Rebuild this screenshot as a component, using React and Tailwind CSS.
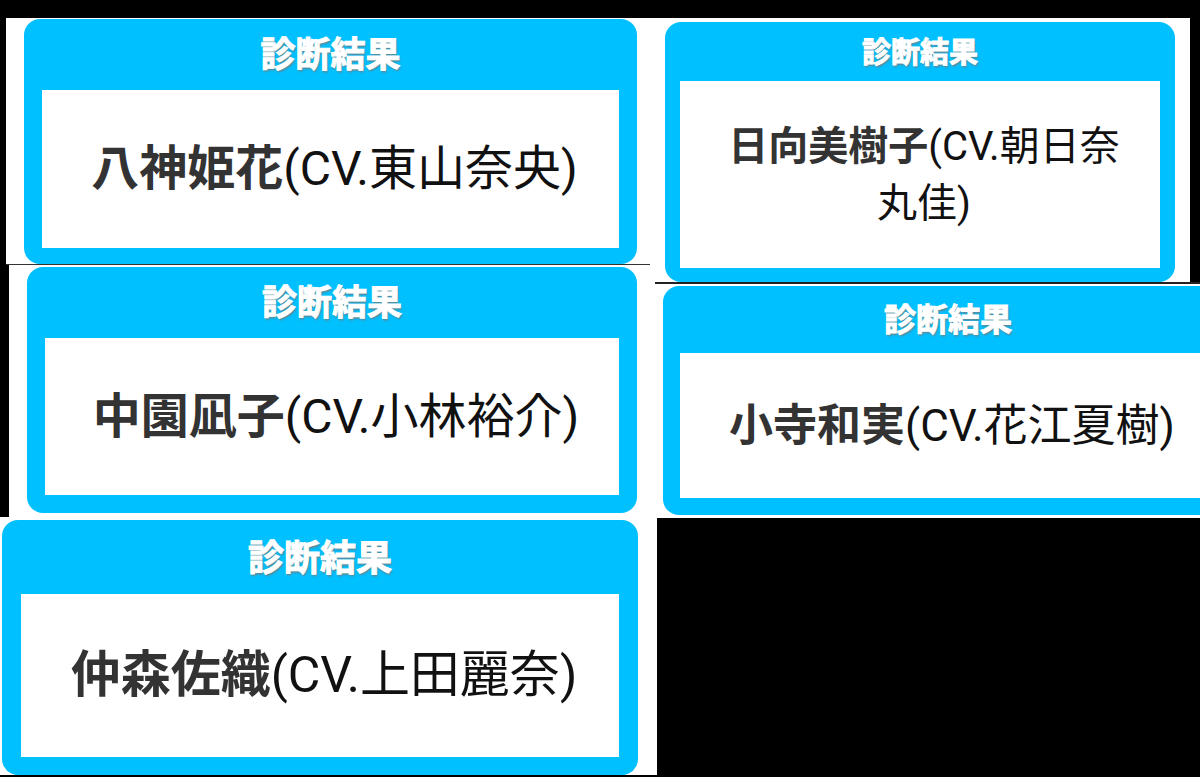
const TITLE = '診断結果'

function ResultCard({ name, cast, className, titleClass, bodyClass }) {
  return (
    <section className={`rounded-2xl bg-[#00c0ff] ${className}`}>
      <h2
        className={`flex items-center justify-center font-bold text-white [-webkit-text-stroke:1px_white] [text-shadow:1px_2px_2px_rgba(120,120,120,0.8)] ${titleClass}`}
      >
        {TITLE}
      </h2>
      <div className={`flex items-center justify-center bg-white text-center text-[#111] ${bodyClass}`}>
        <p>
          <strong className="font-bold text-[#333]">{name}</strong>
          (CV.{cast})
        </p>
      </div>
    </section>
  )
}

export default function App() {
  return (
    <main
      lang="ja"
      className="grid min-h-screen grid-cols-[655fr_545fr] bg-black pt-[18px] pb-[2px] font-[Roboto,'Noto_Sans_CJK_JP',sans-serif]"
    >
      {/* Left column */}
      <div className="bg-white">
        <div className="border-l-6 border-black">
          <div className="px-[18px] pt-px">
            <ResultCard
              name="八神姫花"
              cast="東山奈央"
              className="px-[18px] pb-4"
              titleClass="h-[71px] pt-1 text-[35px]"
              bodyClass="h-[158px] pl-2 text-[48px]"
            />
          </div>
          <hr className="mr-[5px] border-t border-[#333]" />
        </div>
        <div className="border-l-9 border-black px-[18px] pt-[2px] pb-1">
          <ResultCard
            name="中園凪子"
            cast="小林裕介"
            className="px-[18px] pb-[18px]"
            titleClass="h-[71px] pt-1 text-[35px]"
            bodyClass="h-[157px] pl-2 text-[48px]"
          />
        </div>
        <div className="pt-[3px] pr-[17px] pl-[2px]">
          <ResultCard
            name="仲森佐織"
            cast="上田麗奈"
            className="px-[19px] pb-[18px]"
            titleClass="h-[74px] pt-1 text-[36px]"
            bodyClass="h-[163px] pl-2 text-[50px]"
          />
        </div>
      </div>

      {/* Right column */}
      <div className="flex min-w-0 flex-col">
        <div className="border-r-10 border-black bg-white pt-1 pr-[15px] pl-[10px]">
          <ResultCard
            name="日向美樹子"
            cast="朝日奈丸佳"
            className="px-[15px] pb-[14px]"
            titleClass="h-[59px] pt-1 text-[29px]"
            bodyClass="h-[187px] pr-8 pl-10 text-[40px] leading-[57px]"
          />
        </div>
        <hr className="border-t-2 border-[#222]" />
        {/* this card runs off the right edge */}
        <div className="overflow-hidden bg-white pt-[2px] pb-[3px] pl-2">
          <ResultCard
            name="小寺和実"
            cast="花江夏樹"
            className="-mr-[33px] px-[17px] pb-[17px]"
            titleClass="h-[67px] text-[32px]"
            bodyClass="h-[145px] pl-2 text-[44px]"
          />
        </div>
        <div className="flex-1 border-l-2 border-white bg-black" />
      </div>
    </main>
  )
}
